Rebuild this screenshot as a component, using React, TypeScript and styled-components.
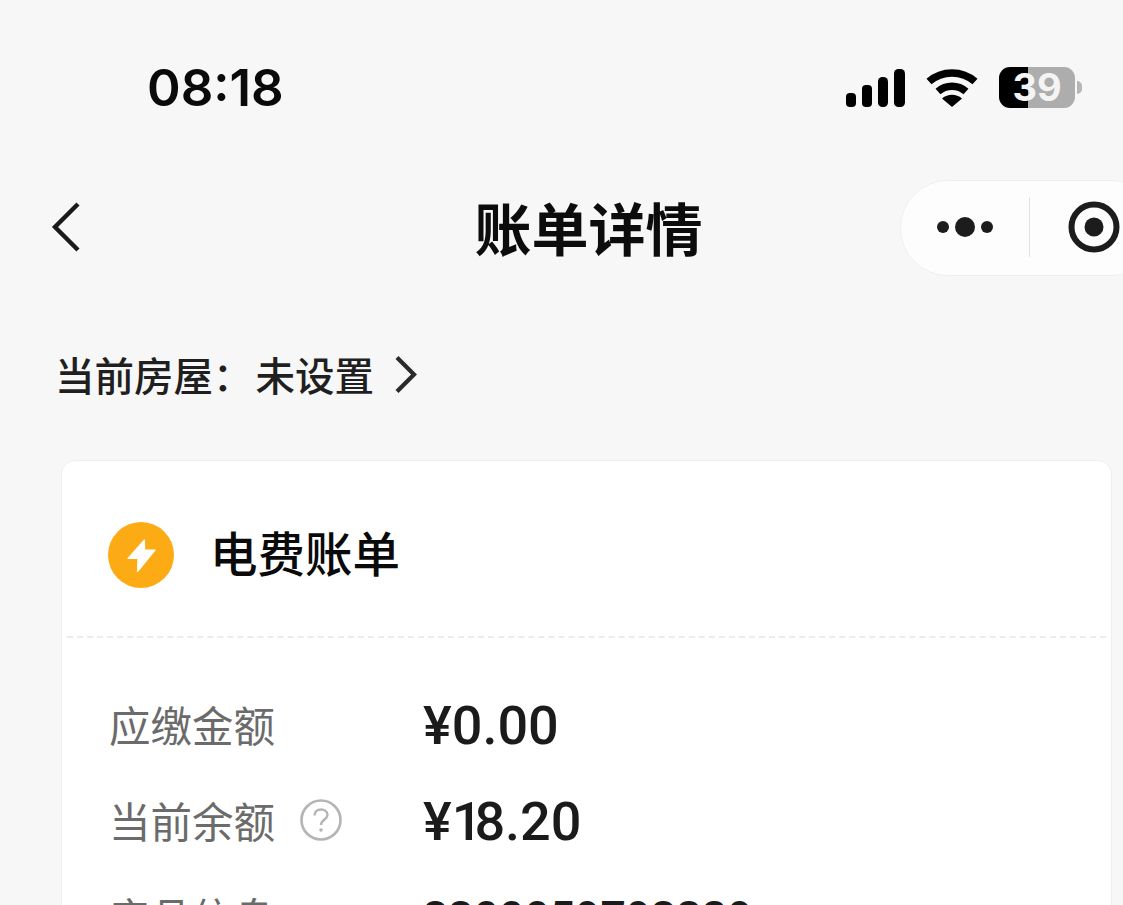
import React from 'react';
import styled, { createGlobalStyle } from 'styled-components';

const CJK = `"Noto Sans CJK SC", "Noto Sans", sans-serif`;

const GlobalStyle = createGlobalStyle`
  html, body {
    margin: 0;
    padding: 0;
    background: #f7f7f7;
  }
  * {
    box-sizing: border-box;
  }
`;

const Page = styled.div`
  width: 1123px;
  height: 905px;
  overflow: hidden;
  background: #f7f7f7;
  font-family: ${CJK};
`;

const StatusBar = styled.div`
  height: 176px;
  padding: 60px 48px 0 147px;
  display: flex;
  justify-content: space-between;
  align-items: flex-start;
`;

const Time = styled.div`
  font-family: Inter, sans-serif;
  font-size: 51px;
  font-weight: 600;
  line-height: 56px;
  color: #0a0a0a;
`;

const StatusIcons = styled.div`
  display: flex;
  align-items: center;
  margin-top: 6px;
  height: 44px;
`;

const Battery = styled.div`
  position: relative;
  width: 76px;
  height: 41px;
  margin: -2px 0 0 21px;
  border-radius: 11px;
  background: linear-gradient(to right, #000 0 38%, #adadad 38% 100%);
  color: #f4f4f4;
  font-family: Inter, sans-serif;
  font-weight: 700;
  font-size: 38px;
  line-height: 41px;
  text-align: center;
  &::after {
    content: '';
    position: absolute;
    right: -7px;
    top: 14px;
    width: 5px;
    height: 13px;
    border-radius: 0 6px 6px 0;
    background: #b5b5b5;
  }
`;

const NavBar = styled.div`
  height: 100px;
  display: flex;
  align-items: center;
  padding: 4px 0 0 51px;
  position: relative;
`;

const Title = styled.h1`
  position: absolute;
  left: 0;
  right: 0;
  top: 50%;
  transform: translateY(-50%);
  margin: 0;
  text-align: center;
  font-size: 57px;
  font-weight: 700;
  line-height: 1.2;
  color: #0c0c0c;
  text-indent: 54px;
`;

const Capsule = styled.div`
  position: absolute;
  left: 900px;
  top: 4px;
  width: 260px;
  height: 96px;
  border-radius: 48px;
  background: #fdfdfd;
  border: 1px solid #efefef;
  display: flex;
  align-items: center;
  padding: 0 0 3px 36px;
`;

const CapsuleDivider = styled.span`
  width: 1px;
  height: 60px;
  margin: 0 38px 0 36px;
  background: #e3e3e3;
`;

const HouseRow = styled.div`
  margin-top: 74px;
  padding-left: 55px;
  height: 48px;
  display: flex;
  align-items: center;
  color: #1f1f1f;
  font-size: 39.5px;
  font-weight: 500;
  line-height: 48px;
`;

const HouseValue = styled.span`
  margin-left: 3px;
`;

const Card = styled.section`
  margin: 62px 11px 0 61px;
  background: #fff;
  border: 1px solid #eeeeee;
  border-radius: 14px;
  height: 600px;
`;

const CardHeader = styled.div`
  height: 177px;
  margin: 0 5px;
  padding: 12px 0 0 41px;
  display: flex;
  align-items: center;
  gap: 36px;
  border-bottom: 2px dashed #ececec;
`;

const CardTitle = styled.h2`
  margin: 0 0 5px;
  font-size: 47.5px;
  font-weight: 500;
  line-height: 60px;
  color: #0a0a0a;
`;

const Rows = styled.div`
  padding: 55px 0 0 47px;
  display: flex;
  flex-direction: column;
  gap: 34px;
`;

const Row = styled.div`
  height: 62px;
  display: flex;
  align-items: center;
`;

const Label = styled.div`
  width: 314px;
  display: flex;
  align-items: center;
  gap: 25px;
  font-size: 41.5px;
  line-height: 62px;
  color: #6b6b6b;
`;

const Value = styled.div<{ $small?: boolean }>`
  margin-top: 3px;
  font-family: Roboto, sans-serif;
  font-size: ${(p) => (p.$small ? 44.6 : 54)}px;
  font-weight: 500;
  line-height: 62px;
  color: #1b1b1b;
`;

// the reference's figures have a proportional 1
const NarrowOne = styled.span`
  letter-spacing: -8px;
`;

const Signal = () => (
  <svg width="59" height="38" viewBox="0 0 59 38" fill="#000">
    <rect x="0" y="24" width="10" height="14" rx="4" />
    <rect x="16" y="16" width="10" height="22" rx="4" />
    <rect x="32" y="8" width="10" height="30" rx="4.5" />
    <rect x="48" y="0" width="11" height="38" rx="4.5" />
  </svg>
);

const Wifi = () => (
  <svg width="52" height="38" viewBox="0 0 52 38" fill="none" style={{ marginLeft: 21 }}>
    <path d="M3 12.5C16 1 36 1 49 12.5" stroke="#000" strokeWidth="7.5" />
    <path d="M12 22.5C20 15.5 32 15.5 40 22.5" stroke="#000" strokeWidth="7.5" />
    <path d="M26 38L16 29.5C22 24.5 30 24.5 36 29.5Z" fill="#000" />
  </svg>
);

const BackIcon = () => (
  <svg width="30" height="52" viewBox="0 0 30 52" fill="none">
    <path d="M27 2L4 25L27 48" stroke="#1a1a1a" strokeWidth="4.4" />
  </svg>
);

const MoreIcon = () => (
  <svg width="56" height="22" viewBox="0 0 56 22" fill="#1c1c1c">
    <circle cx="6" cy="11" r="6" />
    <circle cx="28" cy="11" r="10" />
    <circle cx="50" cy="11" r="6" />
  </svg>
);

const CloseIcon = () => (
  <svg width="52" height="52" viewBox="0 0 52 52">
    <circle cx="26" cy="26" r="22.5" fill="none" stroke="#1c1c1c" strokeWidth="6" />
    <circle cx="26" cy="26" r="9.5" fill="#1c1c1c" />
  </svg>
);

const ChevronIcon = () => (
  <svg width="24" height="38" viewBox="0 0 24 38" fill="none" style={{ marginLeft: 20 }}>
    <path d="M3 2.5L20 19.5L3 36.5" stroke="#2a2a2a" strokeWidth="4.2" />
  </svg>
);

const BoltBadge = () => (
  <svg width="66" height="66" viewBox="0 0 66 66" style={{ flexShrink: 0 }}>
    <circle cx="33" cy="33" r="33" fill="#fdab14" />
    <path d="M36.5 18L20 36.5H30L29.5 49.5L47 28H36.5Z" fill="#fff" stroke="#fff" strokeWidth="1.2" strokeLinejoin="round" />
  </svg>
);

const HelpIcon = () => (
  <svg width="42" height="42" viewBox="0 0 42 42" fill="none">
    <circle cx="21" cy="21" r="19.5" stroke="#b4b4b4" strokeWidth="2.6" />
    <path d="M14.5 16.5C14.5 12.5 17.5 10.5 21 10.5C24.5 10.5 27.5 12.5 27.5 16C27.5 20.5 21 20.5 21 26" stroke="#b4b4b4" strokeWidth="2.4" />
    <circle cx="21" cy="31" r="1.8" fill="#b4b4b4" />
  </svg>
);

const App: React.FC = () => {
  return (
    <Page>
      <GlobalStyle />
      <StatusBar>
        <Time>08:18</Time>
        <StatusIcons>
          <Signal />
          <Wifi />
          <Battery>39</Battery>
        </StatusIcons>
      </StatusBar>
      <NavBar>
        <BackIcon />
        <Title>账单详情</Title>
        <Capsule>
          <MoreIcon />
          <CapsuleDivider />
          <CloseIcon />
        </Capsule>
      </NavBar>
      <HouseRow>
        当前房屋：<HouseValue>未设置</HouseValue>
        <ChevronIcon />
      </HouseRow>
      <Card>
        <CardHeader>
          <BoltBadge />
          <CardTitle>电费账单</CardTitle>
        </CardHeader>
        <Rows>
          <Row>
            <Label>应缴金额</Label>
            <Value>¥0.00</Value>
          </Row>
          <Row>
            <Label>
              当前余额
              <HelpIcon />
            </Label>
            <Value>
              ¥<NarrowOne>1</NarrowOne>8.20
            </Value>
          </Row>
          <Row>
            <Label>产品信息</Label>
            <Value $small>3300059793329</Value>
          </Row>
        </Rows>
      </Card>
    </Page>
  );
};

export default App;
